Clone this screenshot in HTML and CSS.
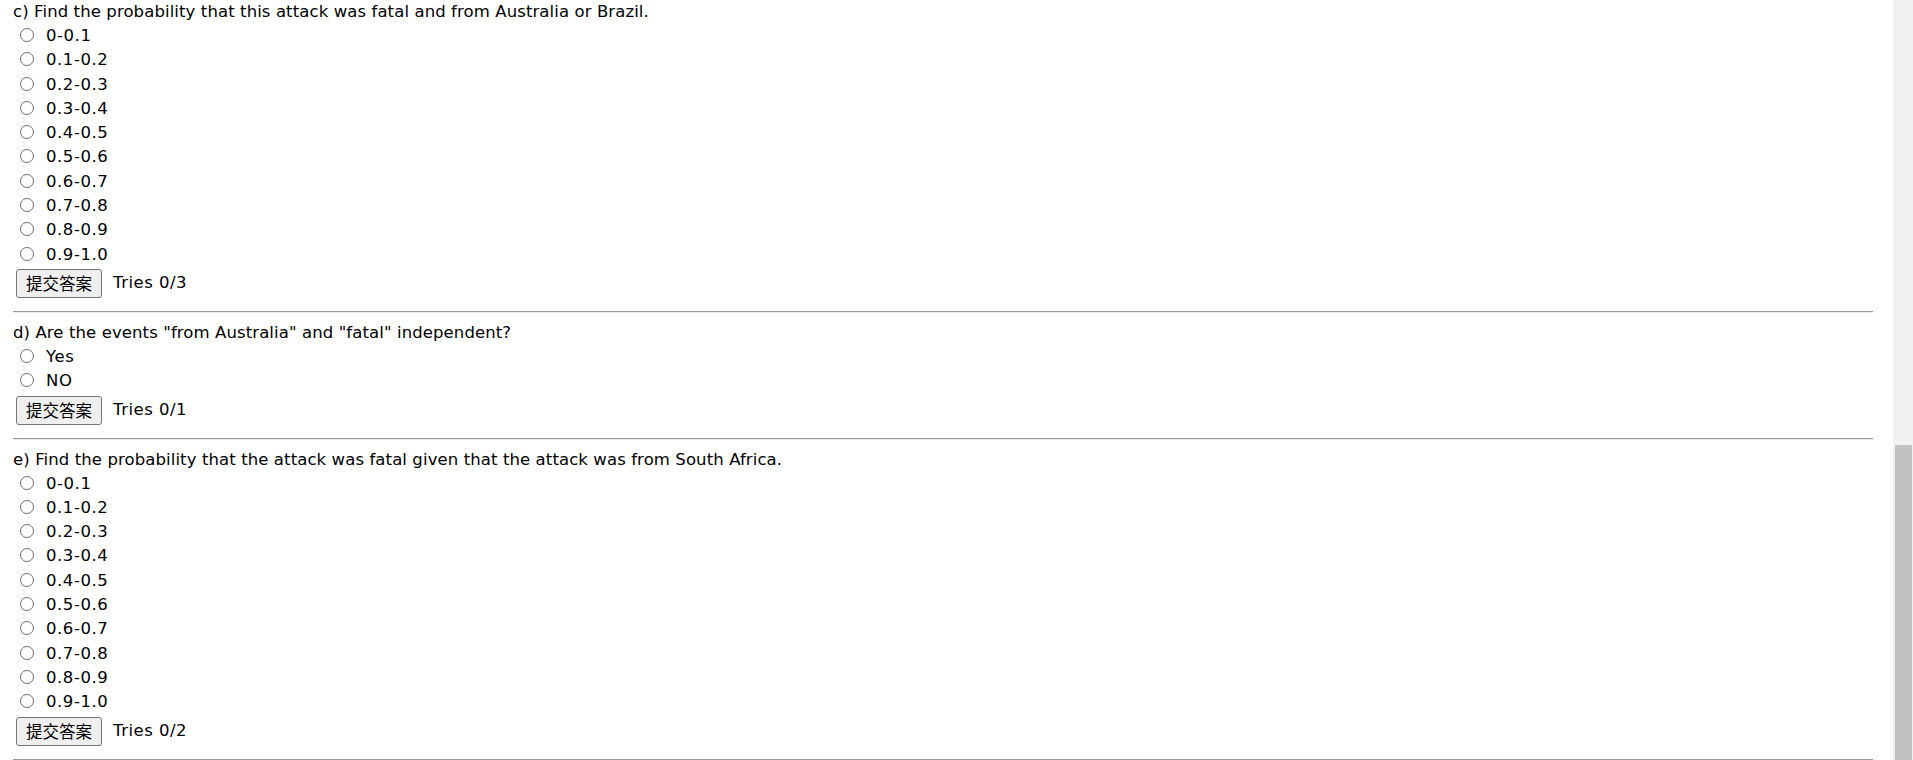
FILE: index.html
```html
<!DOCTYPE html>
<html lang="en">
<head>
<meta charset="utf-8">
<title>Probability questions</title>
<link rel="stylesheet" href="styles.css">
</head>
<body>
<div class="page">
  <main class="content">
    <section class="question">
      <p class="q-title">c) Find the probability that this attack was fatal and from Australia or Brazil.</p>
      <ul class="options">
        <li class="option"><label><input type="radio" name="qc">0-0.1</label></li>
        <li class="option"><label><input type="radio" name="qc">0.1-0.2</label></li>
        <li class="option"><label><input type="radio" name="qc">0.2-0.3</label></li>
        <li class="option"><label><input type="radio" name="qc">0.3-0.4</label></li>
        <li class="option"><label><input type="radio" name="qc">0.4-0.5</label></li>
        <li class="option"><label><input type="radio" name="qc">0.5-0.6</label></li>
        <li class="option"><label><input type="radio" name="qc">0.6-0.7</label></li>
        <li class="option"><label><input type="radio" name="qc">0.7-0.8</label></li>
        <li class="option"><label><input type="radio" name="qc">0.8-0.9</label></li>
        <li class="option"><label><input type="radio" name="qc">0.9-1.0</label></li>
      </ul>
      <div class="submit-row"><button class="submit" type="button">提交答案</button><span class="tries">Tries 0/3</span></div>
    </section>
    <hr class="divider">
    <section class="question">
      <p class="q-title">d) Are the events "from Australia" and "fatal" independent?</p>
      <ul class="options">
        <li class="option"><label><input type="radio" name="qd">Yes</label></li>
        <li class="option"><label><input type="radio" name="qd">NO</label></li>
      </ul>
      <div class="submit-row"><button class="submit" type="button">提交答案</button><span class="tries">Tries 0/1</span></div>
    </section>
    <hr class="divider">
    <section class="question">
      <p class="q-title">e) Find the probability that the attack was fatal given that the attack was from South Africa.</p>
      <ul class="options">
        <li class="option"><label><input type="radio" name="qe">0-0.1</label></li>
        <li class="option"><label><input type="radio" name="qe">0.1-0.2</label></li>
        <li class="option"><label><input type="radio" name="qe">0.2-0.3</label></li>
        <li class="option"><label><input type="radio" name="qe">0.3-0.4</label></li>
        <li class="option"><label><input type="radio" name="qe">0.4-0.5</label></li>
        <li class="option"><label><input type="radio" name="qe">0.5-0.6</label></li>
        <li class="option"><label><input type="radio" name="qe">0.6-0.7</label></li>
        <li class="option"><label><input type="radio" name="qe">0.7-0.8</label></li>
        <li class="option"><label><input type="radio" name="qe">0.8-0.9</label></li>
        <li class="option"><label><input type="radio" name="qe">0.9-1.0</label></li>
      </ul>
      <div class="submit-row"><button class="submit" type="button">提交答案</button><span class="tries">Tries 0/2</span></div>
    </section>
    <hr class="divider">
  </main>
  <div class="scrollbar"><div class="thumb"></div></div>
</div>
</body>
</html>
```

FILE: styles.css
```css
html, body {
  margin: 0;
  height: 100%;
  overflow: hidden;
  background: #ffffff;
}

.page {
  display: flex;
  height: 760px;
}

.content {
  flex: 1;
  min-width: 0;
  padding: 0 20px 0 13px;
  font-family: "DejaVu Sans", Verdana, sans-serif;
  font-size: 16.5px;
  letter-spacing: 0.1px;
  color: #000000;
  overflow: hidden;
}

.q-title {
  margin: 0;
  height: 24px;
  line-height: 24px;
  white-space: nowrap;
}

.options {
  list-style: none;
  margin: 0;
  padding: 0;
}

.option {
  height: 24.3px;
  line-height: 24px;
  white-space: nowrap;
  letter-spacing: 0.55px;
}

.option input {
  -webkit-appearance: none;
  appearance: none;
  box-sizing: border-box;
  width: 14px;
  height: 14px;
  margin: 0 12px 0 7px;
  vertical-align: -1px;
  border: 1px solid #707070;
  border-radius: 50%;
  background: #ffffff;
}

.submit-row {
  display: flex;
  align-items: center;
  gap: 11px;
  margin-top: 2px;
  height: 29px;
}

.submit {
  box-sizing: border-box;
  height: 29px;
  margin-left: 3px;
  padding: 0 9px;
  font-family: "Noto Sans CJK SC", "DejaVu Sans", sans-serif;
  font-size: 16.5px;
  line-height: 27px;
  color: #000000;
  background: #efefef;
  border: 1px solid #767676;
  border-radius: 3px;
}

.tries {
  line-height: 24px;
  letter-spacing: 0.5px;
}

.divider {
  height: 0;
  margin: 13px 0 8px;
  border: 0;
  border-top: 1px solid #9a9a9a;
  border-bottom: 1px solid #eeeeee;
}

.scrollbar {
  flex: 0 0 20px;
  display: flex;
  flex-direction: column;
  justify-content: flex-end;
  background: #f1f1f1;
}

.thumb {
  height: 315px;
  margin: 0 1px 0 2px;
  background: #c1c1c1;
}
```
